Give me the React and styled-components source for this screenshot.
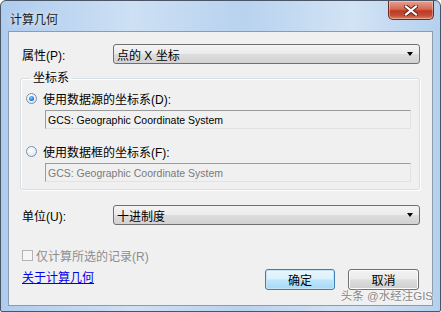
import React from "react";
import styled, { createGlobalStyle } from "styled-components";

const Global = createGlobalStyle`
  html, body { margin: 0; padding: 0; background: #ffffff; overflow: hidden; }
  body { font-family: "Liberation Sans", "Noto Sans CJK SC", sans-serif; }
`;

const FONT = `"Liberation Sans", "Noto Sans CJK SC", sans-serif`;

const Window = styled.div`
  position: relative;
  width: 441px;
  height: 312px;
  box-sizing: border-box;
  border: 1px solid #4a5566;
  border-radius: 6px 6px 2px 2px;
  background: linear-gradient(90deg, #afccee 0%, #cde0f4 30%, #b8d2ef 55%, #d2e3f5 80%, #b5d0ee 100%);
  display: flex;
  flex-direction: column;
  padding: 0 7px 5px 7px;
  overflow: hidden;
`;

const TitleBar = styled.div`
  height: 30px;
  display: flex;
  align-items: flex-start;
  justify-content: space-between;
`;

const Title = styled.div`
  font-family: ${FONT};
  font-size: 12px;
  color: #1b1b1b;
  margin: 9px 0 0 2px;
  text-shadow: 0 0 6px rgba(255, 255, 255, 0.9);
`;

const CloseButton = styled.div`
  width: 46px;
  height: 19px;
  margin-right: -1px;
  box-sizing: border-box;
  border: 1px solid #6b2a22;
  border-top: none;
  border-radius: 0 0 5px 5px;
  background: linear-gradient(180deg, #e6a090 0%, #d56a55 45%, #bd3a22 55%, #c44c33 80%, #dc8164 100%);
  box-shadow: inset 0 0 0 1px rgba(255, 255, 255, 0.35);
  display: flex;
  align-items: center;
  justify-content: center;
`;

const Client = styled.div`
  flex: 1;
  box-sizing: border-box;
  background: #f0f0f0;
  border: 1px solid #8b9bb0;
  padding: 12px 12px 0 12px;
  display: flex;
  flex-direction: column;
  font-family: ${FONT};
  font-size: 12px;
  color: #000;
`;

const FieldRow = styled.div`
  display: grid;
  grid-template-columns: 92px 1fr;
  align-items: center;
  height: 20px;
  margin-top: ${(p) => p.$top || 0}px;
`;

const Label = styled.span`
  padding-left: 1px;
  white-space: nowrap;
`;

const Combo = styled.div`
  height: 20px;
  box-sizing: border-box;
  border: 1px solid #707070;
  border-radius: 3px;
  background: linear-gradient(180deg, #f4f4f4 0%, #ebebeb 49%, #dddddd 51%, #d2d2d2 100%);
  display: flex;
  align-items: center;
  justify-content: space-between;
  padding: 0 6px 0 3px;
`;

const ComboText = styled.span`
  font-size: 12px;
  white-space: nowrap;
`;

const Arrow = styled.span`
  width: 0;
  height: 0;
  border-left: 3.5px solid transparent;
  border-right: 3.5px solid transparent;
  border-top: 4px solid #000;
`;

const Group = styled.fieldset`
  margin: 7px 0 0 -1px;
  padding: 0 8px 0 5px;
  border: 1px solid #d5dfe5;
  border-radius: 3px;
  box-shadow: inset 1px 1px 0 #ffffff, 1px 1px 0 #ffffff;
  height: 119px;
  box-sizing: border-box;
  display: flex;
  flex-direction: column;
`;

const Legend = styled.legend`
  padding: 0 3px;
  margin-left: 4px;
  font-size: 12px;
  line-height: 14px;
`;

const RadioRow = styled.div`
  display: flex;
  align-items: center;
  height: 16px;
  margin-top: ${(p) => p.$top}px;
`;

const Radio = styled.span`
  width: 11px;
  height: 11px;
  box-sizing: border-box;
  border-radius: 50%;
  border: 1px solid #7d8fa6;
  background: radial-gradient(circle at 40% 35%, #ffffff 0%, #e6eef7 60%, #c4d3e4 100%);
  display: flex;
  align-items: center;
  justify-content: center;
  margin-right: 6px;
  flex-shrink: 0;

  &::after {
    content: "";
    display: ${(p) => (p.$checked ? "block" : "none")};
    width: 5px;
    height: 5px;
    border-radius: 50%;
    background: radial-gradient(circle at 40% 35%, #7fd1ff 0%, #1f7ad6 60%, #0b4f9e 100%);
  }
`;

const TextBox = styled.div`
  height: 19px;
  box-sizing: border-box;
  margin: 4px 0 0 19px;
  border-top: 1px solid #9c9c9c;
  border-left: 1px solid #9c9c9c;
  border-right: 1px solid #e2e2e2;
  border-bottom: 1px solid #e2e2e2;
  background: #f0f0f0;
  display: flex;
  align-items: center;
  padding-left: 2px;
  font-family: "Liberation Sans", "DejaVu Sans", sans-serif;
  font-size: 10.5px;
  color: ${(p) => (p.$disabled ? "#7a7a7a" : "#000")};
`;

const CheckRow = styled.div`
  display: flex;
  align-items: center;
  margin-top: 23px;
  height: 14px;
  color: #8d8d8d;
  padding-left: 1px;
`;

const CheckBox = styled.span`
  width: 11px;
  height: 11px;
  box-sizing: border-box;
  border: 1px solid #b4b4b4;
  background: #f6f6f6;
  margin-right: 3px;
`;

const Footer = styled.div`
  display: flex;
  align-items: center;
  justify-content: space-between;
  margin-top: 7px;
`;

const Link = styled.a`
  color: #0000ee;
  text-decoration: underline;
  font-size: 12px;
  padding-left: 1px;
  margin-top: -7px;
`;

const Buttons = styled.div`
  display: flex;
  gap: 13px;
  margin-right: 1px;
`;

const Button = styled.div`
  width: ${(p) => p.$w}px;
  height: 21px;
  box-sizing: border-box;
  border-radius: 3px;
  border: 1px solid ${(p) => (p.$primary ? "#3c7fb1" : "#707070")};
  background: ${(p) =>
    p.$primary
      ? "linear-gradient(180deg, #eaf6fd 0%, #d9f0fc 49%, #bee6fd 51%, #a7d9f5 100%)"
      : "linear-gradient(180deg, #f2f2f2 0%, #ebebeb 49%, #dddddd 51%, #cfcfcf 100%)"};
  box-shadow: inset 0 0 0 1px ${(p) => (p.$primary ? "#c4e5f6" : "#fcfcfc")};
  display: flex;
  align-items: center;
  justify-content: center;
  font-size: 12px;
`;

const Watermark = styled.div`
  position: absolute;
  right: 7px;
  bottom: 8px;
  font-family: ${FONT};
  font-size: 11.5px;
  color: #858585;
  text-shadow: 0 0 2px #ffffff, 0 0 2px #ffffff;
`;

export default function App() {
  return (
    <>
      <Global />
      <Window>
        <TitleBar>
          <Title>计算几何</Title>
          <CloseButton>
            <svg width="14" height="11" viewBox="0 0 14 11">
              <path d="M2 1.5 L12 9.5 M12 1.5 L2 9.5" stroke="#5a2018" strokeWidth="4" strokeLinecap="square" />
              <path d="M2 1.5 L12 9.5 M12 1.5 L2 9.5" stroke="#ffffff" strokeWidth="2.2" strokeLinecap="square" />
            </svg>
          </CloseButton>
        </TitleBar>
        <Client>
          <FieldRow>
            <Label>属性(P):</Label>
            <Combo>
              <ComboText>点的 X 坐标</ComboText>
              <Arrow />
            </Combo>
          </FieldRow>
          <Group>
            <Legend>坐标系</Legend>
            <RadioRow $top={5}>
              <Radio $checked />
              <span>使用数据源的坐标系(D):</span>
            </RadioRow>
            <TextBox>GCS: Geographic Coordinate System</TextBox>
            <RadioRow $top={14}>
              <Radio />
              <span>使用数据框的坐标系(F):</span>
            </RadioRow>
            <TextBox $disabled>GCS: Geographic Coordinate System</TextBox>
          </Group>
          <FieldRow $top={15}>
            <Label>单位(U):</Label>
            <Combo>
              <ComboText>十进制度</ComboText>
              <Arrow />
            </Combo>
          </FieldRow>
          <CheckRow>
            <CheckBox />
            <span>仅计算所选的记录(R)</span>
          </CheckRow>
          <Footer>
            <Link href="#">关于计算几何</Link>
            <Buttons>
              <Button $primary $w={70}>确定</Button>
              <Button $w={71}>取消</Button>
            </Buttons>
          </Footer>
        </Client>
        <Watermark>头条 @水经注GIS</Watermark>
      </Window>
    </>
  );
}
